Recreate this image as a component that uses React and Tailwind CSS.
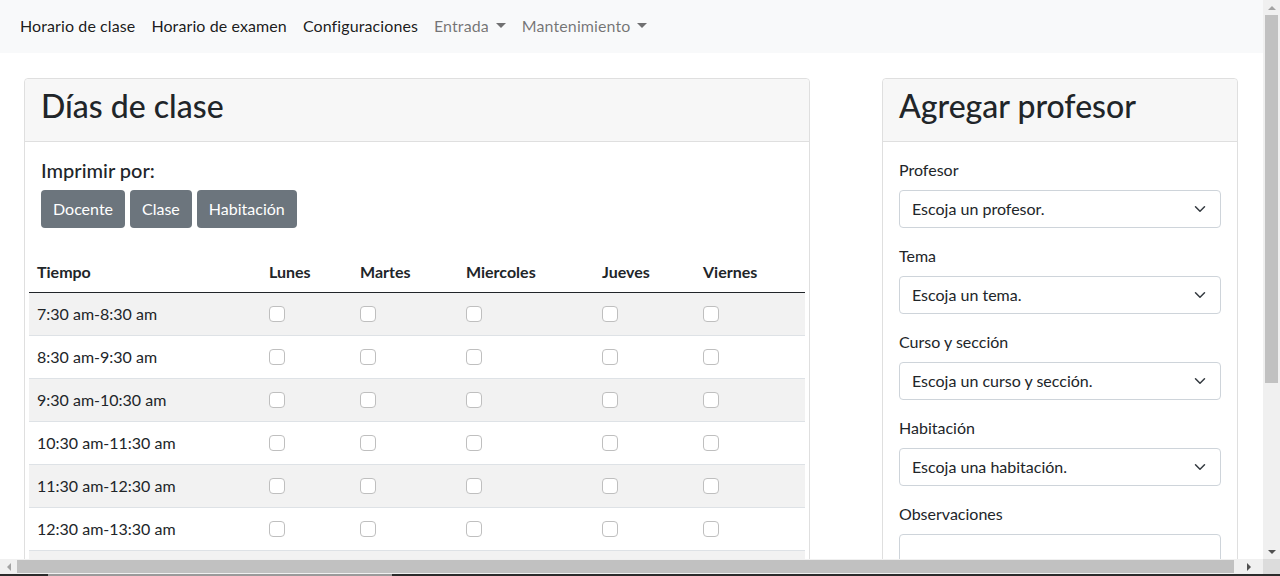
import React from "react"

const font = { fontFamily: "Lato, 'Noto Sans', sans-serif" }

const horas = [
  "7:30 am-8:30 am",
  "8:30 am-9:30 am",
  "9:30 am-10:30 am",
  "10:30 am-11:30 am",
  "11:30 am-12:30 am",
  "12:30 am-13:30 am",
  "",
]

const dias = [
  { name: "Lunes", w: "w-[91px]" },
  { name: "Martes", w: "w-[106px]" },
  { name: "Miercoles", w: "w-[136px]" },
  { name: "Jueves", w: "w-[101px]" },
  { name: "Viernes", w: "w-[110px]" },
]

const campos = [
  { label: "Profesor", ph: "Escoja un profesor." },
  { label: "Tema", ph: "Escoja un tema." },
  { label: "Curso y sección", ph: "Escoja un curso y sección." },
  { label: "Habitación", ph: "Escoja una habitación." },
]

const Chevron = () => (
  <svg width="16" height="12" viewBox="0 0 16 16" fill="none" stroke="#343a40" strokeWidth="2" strokeLinecap="round" strokeLinejoin="round">
    <path d="m2 5 6 6 6-6" />
  </svg>
)

const Caret = () => (
  <span className="inline-block ml-[7px] align-middle w-0 h-0 border-l-[5px] border-r-[5px] border-t-[5px] border-l-transparent border-r-transparent border-t-current mb-[3px]" />
)

const App = () => {
  return (
    <div className="w-[1280px] h-[576px] overflow-hidden flex flex-col bg-white text-[#212529]" style={font}>
      <div className="flex flex-row h-[559px]">
        {/* Page */}
        <div className="w-[1263px] h-[559px] overflow-hidden">
          {/* Navbar */}
          <nav className="h-[53px] bg-[#f8f9fa] flex items-center px-3 pb-[2px] text-base tracking-[0.1px]">
            <a className="px-2 text-black/90">Horario de clase</a>
            <a className="px-2 text-black/90">Horario de examen</a>
            <a className="px-2 text-black/90">Configuraciones</a>
            <a className="px-2 text-black/55">Entrada<Caret /></a>
            <a className="px-2 text-black/55">Mantenimiento<Caret /></a>
          </nav>

          <div className="flex flex-row items-start mt-[25px]">
            {/* Días de clase */}
            <div className="ml-[24px] w-[786px] border border-[#dfdfdf] rounded">
              <div className="h-[63px] bg-[#f7f7f7] border-b border-[#dfdfdf] px-4 pt-2 rounded-t">
                <h2 className="text-[32px] leading-[38px] font-medium">Días de clase</h2>
              </div>
              <div className="p-4">
                <h5 className="text-[20px] leading-6 font-medium mb-2">Imprimir por:</h5>
                <div className="flex flex-row gap-[5px]">
                  <button className="h-[38px] px-3 bg-[#6c757d] text-white rounded text-base">Docente</button>
                  <button className="h-[38px] px-3 bg-[#6c757d] text-white rounded text-base">Clase</button>
                  <button className="h-[38px] px-3 bg-[#6c757d] text-white rounded text-base">Habitación</button>
                </div>
                <div className="-mx-3 mt-6">
                  <div className="flex flex-row h-[41px] items-center border-b border-[#212529] font-bold">
                    <div className="w-[232px] px-2">Tiempo</div>
                    {dias.map((d) => (
                      <div key={d.name} className={`${d.w} px-2`}>{d.name}</div>
                    ))}
                  </div>
                  {horas.map((h, i) => (
                    <div key={i} className={`flex flex-row h-[43px] items-center pb-[1px] border-b border-[#dee2e6] ${i % 2 === 0 ? "bg-[#f2f2f2]" : "bg-white"}`}>
                      <div className="w-[232px] px-2">{h}</div>
                      {dias.map((d) => (
                        <div key={d.name} className={`${d.w} px-2`}>
                          <div className="w-4 h-4 rounded border border-[#bfbfbf] bg-white" />
                        </div>
                      ))}
                    </div>
                  ))}
                </div>
              </div>
            </div>

            {/* Agregar profesor */}
            <div className="ml-[72px] w-[356px] border border-[#dfdfdf] rounded">
              <div className="h-[63px] bg-[#f7f7f7] border-b border-[#dfdfdf] px-4 pt-2 rounded-t">
                <h2 className="text-[32px] leading-[38px] font-medium">Agregar profesor</h2>
              </div>
              <div className="p-4">
                {campos.map((c) => (
                  <div key={c.label} className="mb-4">
                    <label className="block leading-6 mb-2">{c.label}</label>
                    <div className="h-[38px] border border-[#ced4da] rounded flex flex-row items-center justify-between pl-3 pr-3">
                      <span>{c.ph}</span>
                      <Chevron />
                    </div>
                  </div>
                ))}
                <label className="block leading-6 mb-2">Observaciones</label>
                <div className="h-[62px] border border-[#ced4da] rounded" />
              </div>
            </div>
          </div>
        </div>

        {/* Vertical scrollbar */}
        <div className="w-[17px] h-[559px] bg-[#f0f0f0] flex flex-col items-center">
          <div className="h-[15px] flex items-center justify-center">
            <span className="w-0 h-0 border-l-[4px] border-r-[4px] border-b-[4px] border-l-transparent border-r-transparent border-b-[#a3a3a3]" />
          </div>
          <div className="w-[13px] h-[368px] bg-[#c1c1c1]" />
          <div className="flex-1" />
          <div className="h-[15px] flex items-center justify-center">
            <span className="w-0 h-0 border-l-[4px] border-r-[4px] border-t-[4px] border-l-transparent border-r-transparent border-t-[#505050]" />
          </div>
        </div>
      </div>

      {/* Horizontal scrollbar */}
      <div className="flex flex-row h-[15px]">
        <div className="w-[1263px] bg-[#f0f0f0] flex flex-row items-center">
          <div className="w-[17px] flex items-center justify-center">
            <span className="w-0 h-0 border-t-[4px] border-b-[4px] border-r-[4px] border-t-transparent border-b-transparent border-r-[#a3a3a3]" />
          </div>
          <div className="w-[1217px] h-[13px] bg-[#c1c1c1]" />
          <div className="flex-1 flex items-center justify-center">
            <span className="w-0 h-0 border-t-[4px] border-b-[4px] border-l-[4px] border-t-transparent border-b-transparent border-l-[#505050]" />
          </div>
        </div>
        <div className="w-[17px] bg-[#dcdcdc]" />
      </div>
      <div className="h-[2px] flex flex-row">
        <div className="w-[48px] bg-[#2b2b2b]" />
        <div className="w-[344px] bg-[#9a9a9a]" />
        <div className="flex-1 bg-[#2b2b2b]" />
      </div>
    </div>
  )
}

export default App
